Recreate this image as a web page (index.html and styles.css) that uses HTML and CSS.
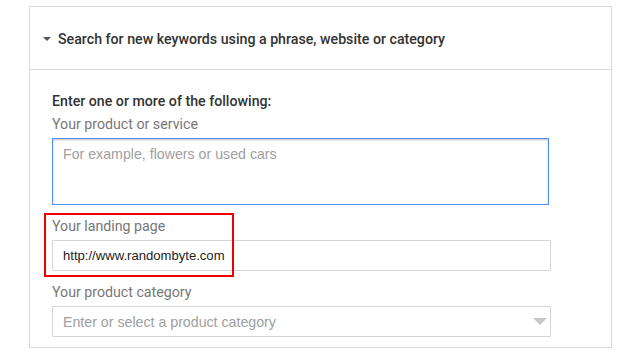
FILE: index.html
```html
<!DOCTYPE html>
<html>
<head>
<meta charset="utf-8">
<link rel="stylesheet" href="styles.css">
</head>
<body>
<div class="panel">
  <div class="panel-head">
    <span class="caret"></span>
    <span class="head-title">Search for new keywords using a phrase, website or category</span>
  </div>
  <div class="panel-body">
    <div class="intro">Enter one or more of the following:</div>
    <div class="field">
      <div class="label">Your product or service</div>
      <div class="textarea"><span class="placeholder">For example, flowers or used cars</span></div>
    </div>
    <div class="field field-landing">
      <div class="label">Your landing page</div>
      <div class="input"><span class="value">http://www.randombyte.com</span></div>
      <div class="highlight"></div>
    </div>
    <div class="field">
      <div class="label">Your product category</div>
      <div class="input select"><span class="placeholder">Enter or select a product category</span><span class="select-arrow"></span></div>
    </div>
  </div>
</div>
</body>
</html>
```
FILE: styles.css
```css
html, body {
  margin: 0;
  padding: 0;
  background: #ffffff;
}
body {
  padding: 6px 0 0 29px;
  font-family: Roboto, "Liberation Sans", Arial, sans-serif;
}
.panel {
  box-sizing: border-box;
  width: 583px;
  height: 342px;
  border: 1px solid #d9d9d9;
  background: #fff;
}
.panel-head {
  box-sizing: border-box;
  height: 63px;
  border-bottom: 1px solid #d9d9d9;
  display: flex;
  align-items: center;
  padding-left: 13px;
  padding-top: 1px;
}
.caret {
  width: 0;
  height: 0;
  border-left: 4px solid transparent;
  border-right: 4px solid transparent;
  border-top: 4px solid #555;
  margin-right: 7px;
}
.head-title {
  font-size: 14.2px;
  font-weight: 500;
  color: #333;
}
.panel-body {
  padding: 23px 0 0 22px;
  display: flex;
  flex-direction: column;
}
.intro {
  font-size: 14.2px;
  font-weight: 500;
  color: #333;
  line-height: 16px;
  height: 16px;
  margin-bottom: 7px;
}
.field {
  display: flex;
  flex-direction: column;
  margin-bottom: 13px;
}
.field-landing {
  position: relative;
  margin-bottom: 13px;
}
.label {
  font-size: 14.2px;
  color: #777;
  line-height: 16px;
  height: 16px;
  margin-bottom: 6px;
}
.textarea {
  box-sizing: border-box;
  width: 497px;
  height: 67px;
  border: 1px solid #4d90fe;
  box-shadow: inset 0 1px 2px rgba(0,0,0,0.25);
  padding: 5px 10px;
  background: #fff;
}
.input {
  box-sizing: border-box;
  width: 499px;
  height: 31px;
  border: 1px solid #d5d5d5;
  border-radius: 1px;
  padding: 0 10px;
  display: flex;
  align-items: center;
  background: #fff;
}
.placeholder {
  font-family: "Liberation Sans", Arial, sans-serif;
  font-size: 14.2px;
  color: #a0a0a0;
}
.value {
  font-family: "Liberation Sans", Arial, sans-serif;
  font-size: 13.1px;
  color: #222;
}
.select {
  justify-content: space-between;
  padding-right: 3px;
}
.select-arrow {
  width: 0;
  height: 0;
  border-left: 7px solid transparent;
  border-right: 7px solid transparent;
  border-top: 7px solid #c8c8c8;
}
.highlight {
  position: absolute;
  left: -8px;
  top: -5px;
  width: 190px;
  height: 64px;
  box-sizing: border-box;
  border: 2px solid #f00000;
  pointer-events: none;
}
```
